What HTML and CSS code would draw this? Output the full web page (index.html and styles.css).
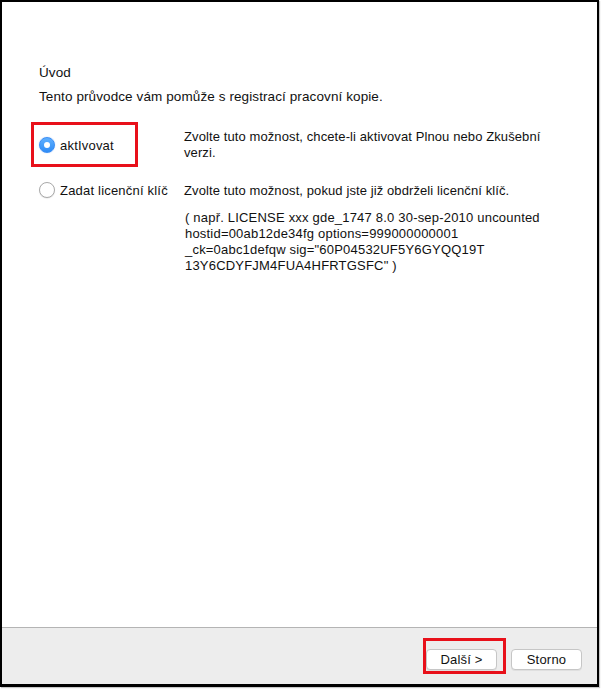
FILE: index.html
```html
<!DOCTYPE html>
<html lang="cs">
<head>
<meta charset="utf-8">
<title>Úvod</title>
<link rel="stylesheet" href="styles.css">
</head>
<body>
<div class="window">
  <main class="content">
    <h1 class="title">Úvod</h1>
    <p class="intro">Tento průvodce vám pomůže s registrací pracovní kopie.</p>

    <div class="option option-center">
      <label class="choice">
        <span class="hl">
          <span class="radio radio-on"></span>
          <span class="choice-text">aktIvovat</span>
        </span>
      </label>
      <div class="desc">
        <p>Zvolte tuto možnost, chcete-li aktivovat Plnou nebo Zkušební verzi.</p>
      </div>
    </div>

    <div class="option option-top">
      <label class="choice">
        <span class="radio"></span>
        <span class="choice-text">Zadat licenční klíč</span>
      </label>
      <div class="desc">
        <p>Zvolte tuto možnost, pokud jste již obdrželi licenční klíč.</p>
        <p class="example">( např. LICENSE xxx gde_1747 8.0 30-sep-2010 uncounted<br>hostid=00ab12de34fg options=999000000001<br>_ck=0abc1defqw sig="60P04532UF5Y6GYQQ19T<br>13Y6CDYFJM4FUA4HFRTGSFC" )</p>
      </div>
    </div>
  </main>
  <footer class="footer">
    <span class="btn-wrap hl-btn"><button class="btn">Další &gt;</button></span>
    <button class="btn">Storno</button>
  </footer>
</div>
</body>
</html>
```

FILE: styles.css
```css
html, body {
  margin: 0;
  padding: 0;
  background: #ffffff;
}

body {
  width: 602px;
  height: 689px;
  overflow: hidden;
  font-family: "Liberation Sans", Arial, sans-serif;
  font-size: 13px;
  line-height: 16px;
  color: #111;
}

.window {
  box-sizing: border-box;
  width: 599px;
  height: 687px;
  border-style: solid;
  border-color: #000;
  border-width: 2px 2px 3px 2px;
  display: flex;
  flex-direction: column;
  background: #fff;
  box-shadow: 1px 1px 1px #c8c8c8;
}

.content {
  flex: 1;
  padding: 62px 0 0 37px;
}

.title {
  margin: 0;
  font-size: 13.5px;
  font-weight: normal;
  line-height: 17px;
  letter-spacing: 0.1px;
}

.intro {
  margin: 7px 0 0;
  font-size: 13.5px;
  line-height: 17px;
  letter-spacing: 0.1px;
}

.option {
  display: flex;
}

.option-center {
  align-items: center;
  margin-top: 24px;
}

.option-top {
  align-items: flex-start;
  margin-top: 22px;
}

.choice {
  width: 145px;
  flex: none;
  display: flex;
  align-items: center;
  letter-spacing: 0.2px;
}

.option-center .choice {
  padding-top: 2px;
}

.hl {
  position: relative;
  display: flex;
  align-items: center;
}

.hl::after {
  content: "";
  position: absolute;
  top: -16px;
  bottom: -13px;
  left: -8px;
  right: -24px;
  border: 3px solid #e8101a;
}

.radio {
  width: 16px;
  height: 16px;
  box-sizing: border-box;
  border-radius: 50%;
  border: 1px solid #aaaaaa;
  background: #fff;
  box-shadow: 0 0.5px 1px rgba(0,0,0,0.12);
  margin-right: 5px;
  flex: none;
  position: relative;
  top: -1px;
}

.radio-on {
  border: 1px solid #3a8ef5;
  background: linear-gradient(#5fb0ff, #2f8cf6);
  box-shadow: 0 0 1px rgba(40,120,240,0.6);
}

.radio-on::before {
  content: "";
  position: absolute;
  left: 4px;
  top: 4px;
  width: 6px;
  height: 6px;
  border-radius: 50%;
  background: #fff;
}

.desc p {
  margin: 0;
}

.desc {
  width: 385px;
  letter-spacing: 0.1px;
}

.desc .example {
  margin-top: 11px;
  padding-left: 1px;
  letter-spacing: 0.2px;
}

.footer {
  height: 57px;
  box-sizing: border-box;
  border-top: 1px solid #b4b4b4;
  background: #ededed;
  display: flex;
  justify-content: flex-end;
  align-items: flex-start;
  padding: 21px 15px 0 0;
  gap: 14px;
}

.btn {
  font-family: "Liberation Sans", Arial, sans-serif;
  font-size: 13px;
  line-height: 15px;
  color: #111;
  height: 21px;
  box-sizing: border-box;
  padding: 2px 0 2px;
  background: #fff;
  border: 1px solid #c6c6c6;
  border-radius: 4px;
  box-shadow: 0 1px 0 rgba(0,0,0,0.06);
  width: 71px;
  letter-spacing: 0.2px;
}

.btn-wrap {
  position: relative;
  display: flex;
}

.hl-btn::after {
  content: "";
  position: absolute;
  top: -11px;
  bottom: -4px;
  left: -3px;
  right: -9px;
  border: 3px solid #e8101a;
}
```
